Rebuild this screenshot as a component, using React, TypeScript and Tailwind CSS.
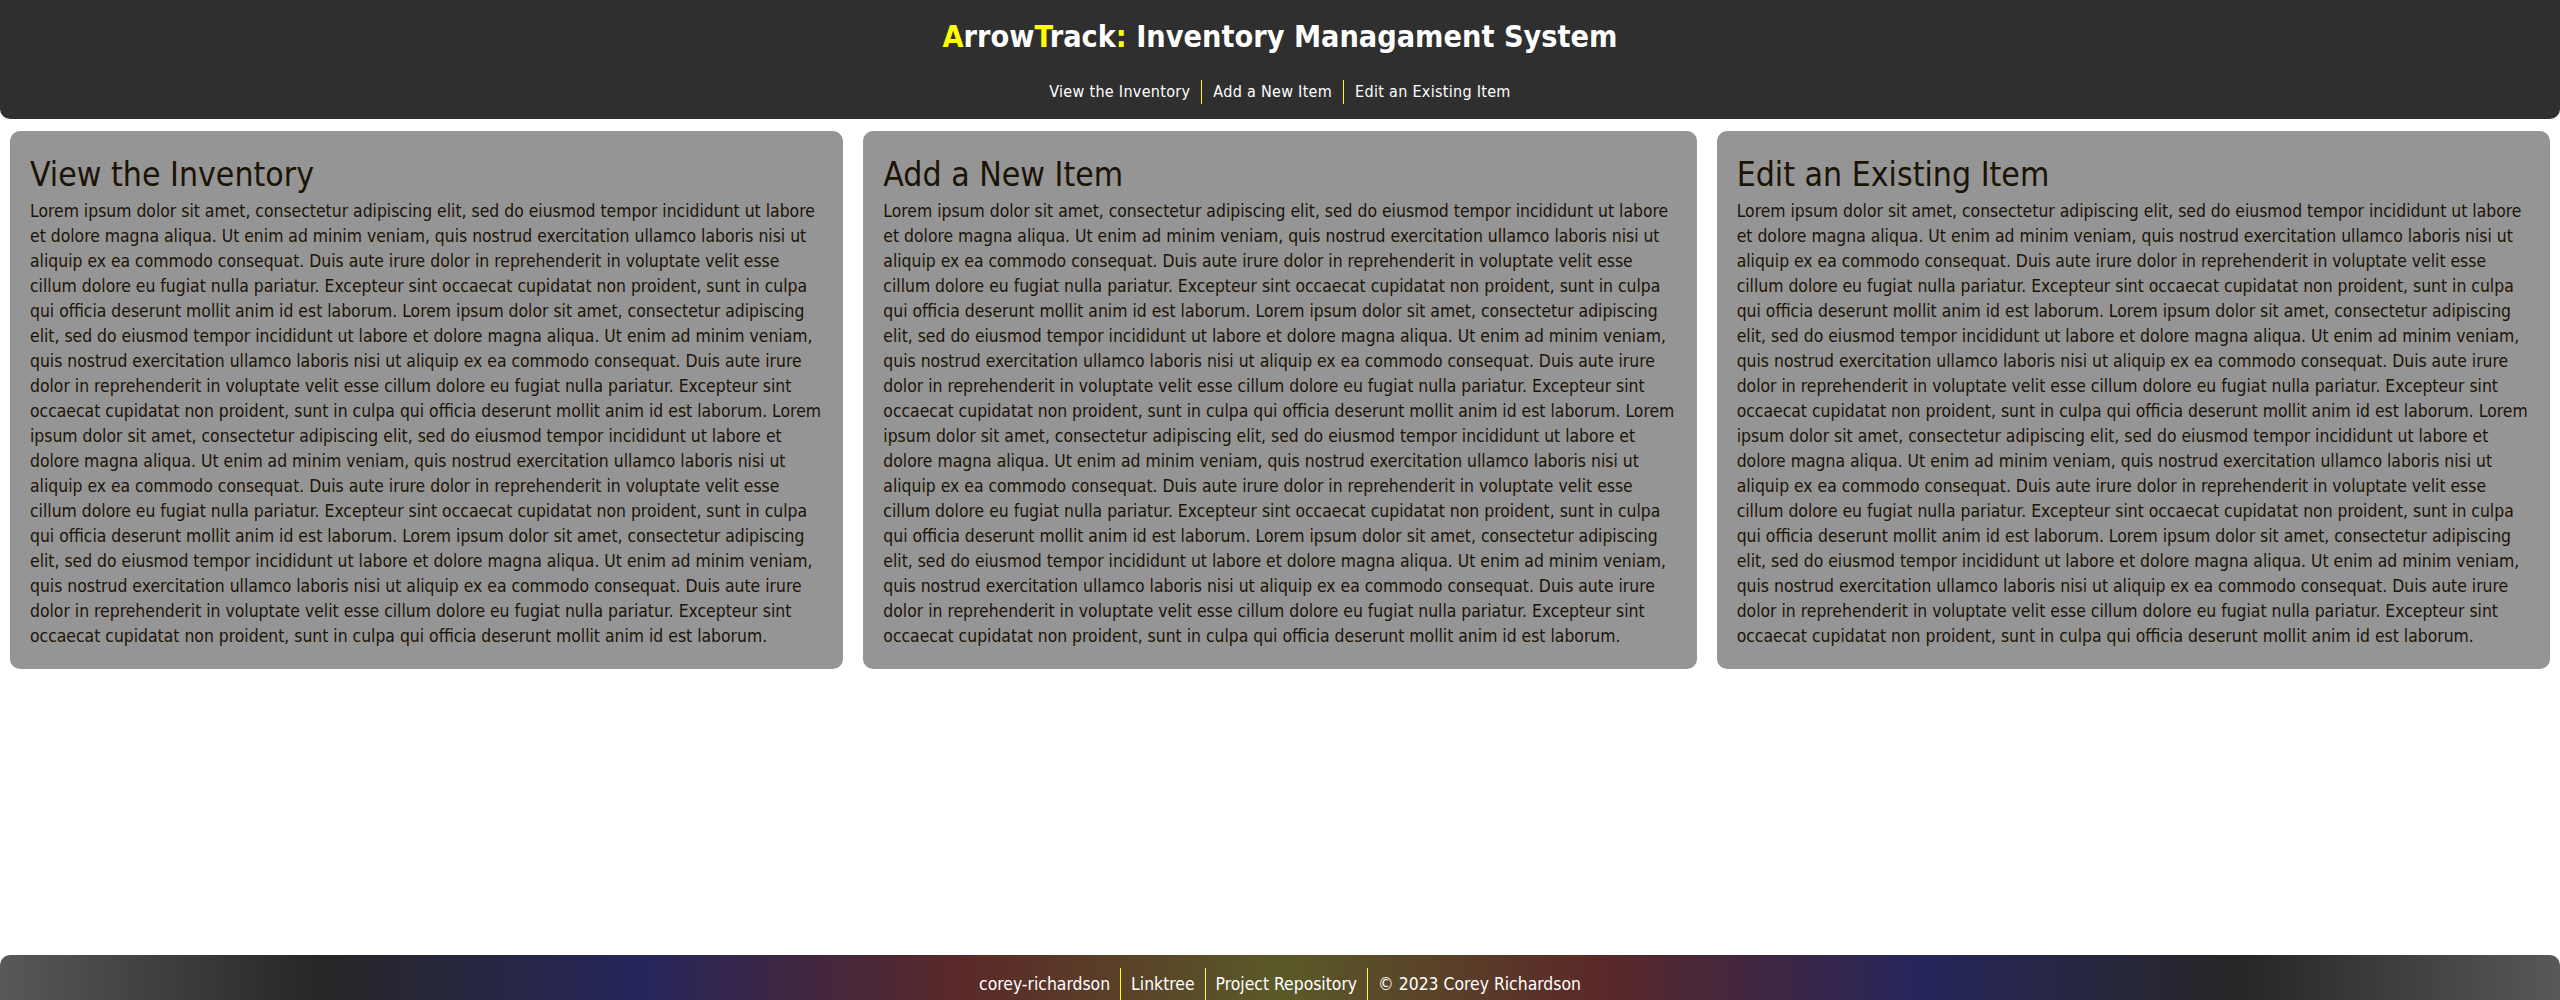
const lorem =
  "Lorem ipsum dolor sit amet, consectetur adipiscing elit, sed do eiusmod tempor incididunt ut labore et dolore magna aliqua. Ut enim ad minim veniam, quis nostrud exercitation ullamco laboris nisi ut aliquip ex ea commodo consequat. Duis aute irure dolor in reprehenderit in voluptate velit esse cillum dolore eu fugiat nulla pariatur. Excepteur sint occaecat cupidatat non proident, sunt in culpa qui officia deserunt mollit anim id est laborum.";

const text = [lorem, lorem, lorem, lorem].join(" ");

const cards = ["View the Inventory", "Add a New Item", "Edit an Existing Item"];

function Header() {
  return (
    <header className="flex w-full flex-col items-center rounded-b-[10px] bg-[#2f2f2f] pb-[15px] pt-[14px]">
      <h1 className="text-[30.3px] font-bold leading-[46px] text-white">
        <span className="text-[#ffff00]">A</span>rrow
        <span className="text-[#ffff00]">T</span>rack
        <span className="text-[#ffff00]">:</span> Inventory Managament System
      </h1>
      <nav className="mt-[20px] flex items-stretch text-[16px] leading-[24px] tracking-[0.3px] text-white">
        <a className="pr-[11px]">View the Inventory</a>
        <a className="border-l border-[#ffff00] px-[11px]">Add a New Item</a>
        <a className="border-l border-[#ffff00] pl-[11px]">Edit an Existing Item</a>
      </nav>
    </header>
  );
}

function Card({ title }: { title: string }) {
  return (
    <section className="rounded-[10px] bg-[#959595] px-5 pb-5 pt-5 text-[#1c1305]">
      <h2 className="text-[33.5px] leading-[48px]">{title}</h2>
      <p className="text-[17.4px] leading-[25px]">{text}</p>
    </section>
  );
}

function Footer() {
  return (
    <footer
      className="flex h-[45px] w-full items-end justify-center rounded-t-[10px] text-[17.4px] leading-[24px] text-white"
      style={{
        background:
          "linear-gradient(to right, #585858 0%, #262626 12.5%, #26265c 25%, #5a2828 37.5%, #5a5a28 50%, #5a2828 62.5%, #26265c 75%, #262626 87.5%, #585858 100%)",
      }}
    >
      <div className="flex h-[32px] items-center">
        <a className="pr-[10px]">corey-richardson</a>
        <a className="flex h-full items-center border-l border-[#ffff00] px-[10px]">Linktree</a>
        <a className="flex h-full items-center border-l border-[#ffff00] px-[10px]">Project Repository</a>
        <span className="flex h-full items-center border-l border-[#ffff00] pl-[10px]">
          © 2023 Corey Richardson
        </span>
      </div>
    </footer>
  );
}

export default function App() {
  return (
    <div
      className="flex min-h-screen flex-col bg-white"
      style={{ fontFamily: '"DejaVu Sans Condensed", "DejaVu Sans", sans-serif' }}
    >
      <Header />
      <main className="grid flex-1 grid-cols-3 items-start gap-5 px-[10px] pt-[12px]">
        {cards.map((c) => (
          <Card key={c} title={c} />
        ))}
      </main>
      <Footer />
    </div>
  );
}
